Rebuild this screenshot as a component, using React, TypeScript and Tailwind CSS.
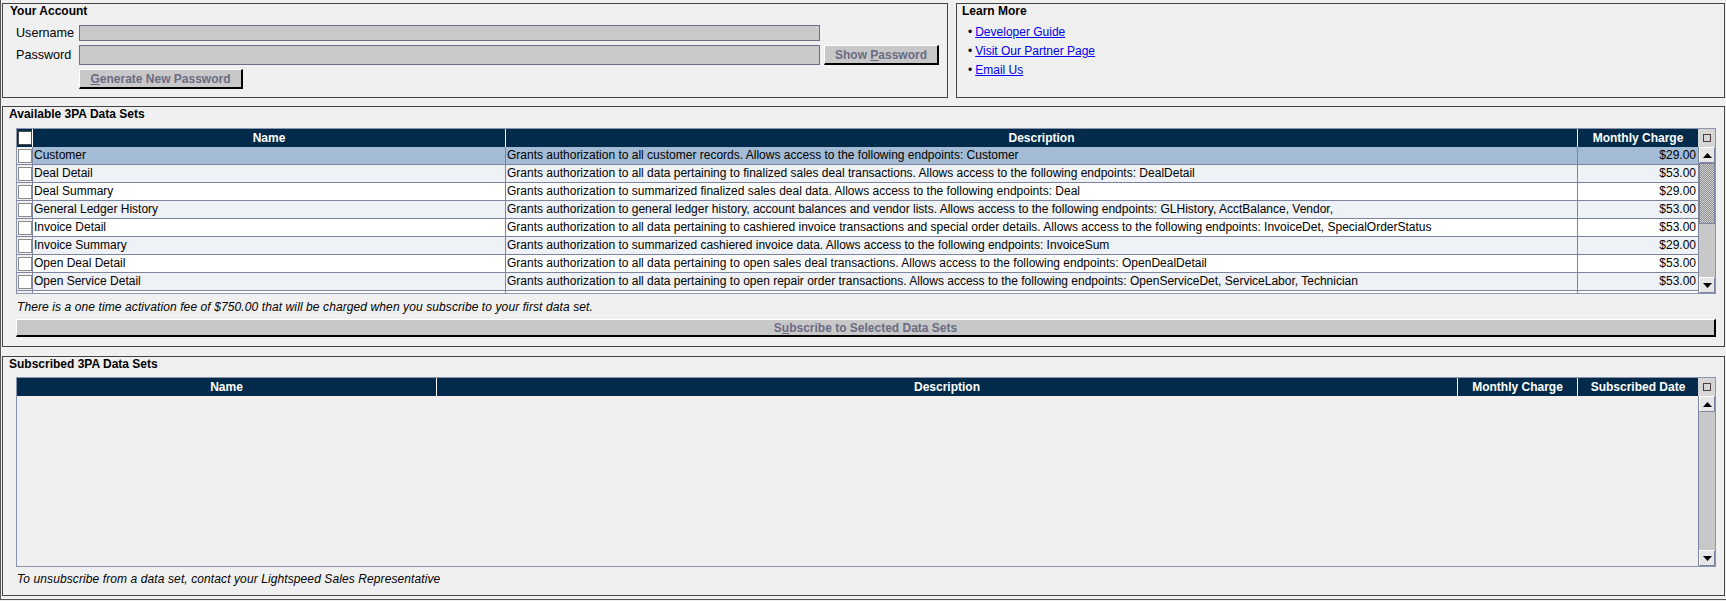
import React from "react";

type Row = { name: string; desc: string; charge: string };

const rows: Row[] = [
  { name: "Customer", desc: "Grants authorization to all customer records. Allows access to the following endpoints: Customer", charge: "$29.00" },
  { name: "Deal Detail", desc: "Grants authorization to all data pertaining to finalized sales deal transactions. Allows access to the following endpoints: DealDetail", charge: "$53.00" },
  { name: "Deal Summary", desc: "Grants authorization to summarized finalized sales deal data. Allows access to the following endpoints: Deal", charge: "$29.00" },
  { name: "General Ledger History", desc: "Grants authorization to general ledger history, account balances and vendor lists. Allows access to the following endpoints: GLHistory, AcctBalance, Vendor,", charge: "$53.00" },
  { name: "Invoice Detail", desc: "Grants authorization to all data pertaining to cashiered invoice transactions and special order details. Allows access to the following endpoints: InvoiceDet, SpecialOrderStatus", charge: "$53.00" },
  { name: "Invoice Summary", desc: "Grants authorization to summarized cashiered invoice data. Allows access to the following endpoints: InvoiceSum", charge: "$29.00" },
  { name: "Open Deal Detail", desc: "Grants authorization to all data pertaining to open sales deal transactions. Allows access to the following endpoints: OpenDealDetail", charge: "$53.00" },
  { name: "Open Service Detail", desc: "Grants authorization to all data pertaining to open repair order transactions. Allows access to the following endpoints: OpenServiceDet, ServiceLabor, Technician", charge: "$53.00" },
  { name: "", desc: "", charge: "" },
];

const UpArrow = () => (
  <svg width="9" height="5" viewBox="0 0 9 5">
    <path d="M0 5 L4.5 0 L9 5 Z" fill="#000" />
  </svg>
);
const DownArrow = () => (
  <svg width="9" height="5" viewBox="0 0 9 5">
    <path d="M0 0 L4.5 5 L9 0 Z" fill="#000" />
  </svg>
);

function ScrollBtn({ up }: { up: boolean }) {
  return (
    <div className="h-[16px] w-[16px] flex items-center justify-center bg-[#e6e6e6] border border-t-white border-l-white border-b-[#7c84a0] border-r-[#7c84a0] shrink-0">
      {up ? <UpArrow /> : <DownArrow />}
    </div>
  );
}

function Checkbox({ dark }: { dark?: boolean }) {
  return (
    <div
      className={
        dark
          ? "w-[14px] h-[14px] bg-white border border-[#4a4a4a]"
          : "w-[14px] h-[14px] bg-white border border-[#8a8a8a]"
      }
    />
  );
}

function Corner() {
  return (
    <div className="w-[17px] bg-[#d6d6d6] flex items-center justify-center shrink-0">
      <div className="w-[8px] h-[8px] border border-[#503a3a]" />
    </div>
  );
}

function Btn({ children, className }: { children: React.ReactNode; className: string }) {
  return (
    <div
      className={
        "bg-[#c8c8c8] border-t border-l border-t-white border-l-white border-b-2 border-r-2 border-b-black border-r-black text-[#6b6b84] font-bold text-[12px] flex items-center justify-center " +
        className
      }
    >
      {children}
    </div>
  );
}

export default function App() {
  return (
    <div className="w-[1726px] h-[601px] bg-[#f0f0f0] text-[12px] text-black font-['Liberation_Sans',Arial,sans-serif] overflow-hidden">
      <div className="h-[600px] border-l border-b border-[#555] pl-[1px] pr-[1px] pt-[3px] flex flex-col">
        {/* Top row */}
        <div className="flex gap-[8px] h-[95px] shrink-0">
          <div className="w-[946px] border border-[#444] pl-[13px] flex flex-col">
            <div className="font-bold leading-[14px] -ml-[6px]">Your Account</div>
            <div className="flex items-center mt-[7px] h-[16px]">
              <div className="w-[63px] text-[12.6px]">Username</div>
              <div className="w-[741px] h-[16px] bg-[#c9c9c9] border border-[#6e6e86]" />
            </div>
            <div className="flex items-center mt-[4px] h-[20px]">
              <div className="w-[63px] text-[12.6px]">Password</div>
              <div className="w-[741px] h-[20px] bg-[#c9c9c9] border border-[#6e6e86]" />
              <Btn className="ml-[4px] w-[115px] h-[20px]">
                <span>
                  Show <span className="underline">P</span>assword
                </span>
              </Btn>
            </div>
            <div className="flex mt-[4px] pl-[63px]">
              <Btn className="w-[164px] h-[20px]">
                <span>
                  <span className="underline">G</span>enerate New Password
                </span>
              </Btn>
            </div>
          </div>
          <div className="w-[769px] border border-[#444] pl-[5px] flex flex-col">
            <div className="font-bold leading-[14px]">Learn More</div>
            <div className="mt-[7px] pl-[6px] flex flex-col gap-[5px] leading-[14px]">
              {["Developer Guide", "Visit Our Partner Page", "Email Us"].map((t) => (
                <div key={t} className="flex items-center">
                  <span className="mr-[3px]">•</span>
                  <span className="text-[#0000ee] underline">{t}</span>
                </div>
              ))}
            </div>
          </div>
        </div>

        {/* Available */}
        <div className="mt-[8px] h-[241px] shrink-0 border border-[#444] flex flex-col">
          <div className="font-bold leading-[14px] pl-[6px]">Available 3PA Data Sets</div>
          <div className="mt-[7px] ml-[13px] mr-[8px] border border-[#8a94ae] flex flex-col">
            <div className="flex h-[18px] bg-[#022a4b] text-white font-bold leading-[18px]">
              <div className="w-[16px] border-r border-white flex items-center justify-center">
                <Checkbox dark />
              </div>
              <div className="w-[473px] border-r border-white text-center">Name</div>
              <div className="w-[1072px] border-r border-white text-center">Description</div>
              <div className="w-[120px] text-center">Monthly Charge</div>
              <Corner />
            </div>
            <div className="flex h-[146px]">
              <div className="w-[1681px] overflow-hidden flex flex-col">
                {rows.map((r, i) => (
                  <div
                    key={i}
                    className={
                      "flex h-[18px] shrink-0 border-b border-[#7c84a0] leading-[17px] " +
                      (i === 0 ? "bg-[#a3bbd4]" : i % 2 === 1 ? "bg-[#eef1f5]" : "bg-white")
                    }
                  >
                    <div className="w-[16px] border-r border-[#7c84a0] flex items-center justify-center bg-[#f0f0f0]">
                      {r.name ? <Checkbox /> : null}
                    </div>
                    <div className="w-[473px] border-r border-[#7c84a0] pl-[1px] whitespace-nowrap overflow-hidden">{r.name}</div>
                    <div className="w-[1072px] border-r border-[#7c84a0] pl-[1px] whitespace-nowrap overflow-hidden">{r.desc}</div>
                    <div className="w-[120px] text-right pr-[2px]">{r.charge}</div>
                  </div>
                ))}
              </div>
              <div className="w-[17px] flex flex-col bg-[#c8c8c8] border-l border-[#7c84a0]">
                <ScrollBtn up />
                <div className="h-[61px] border border-[#7c84a0] bg-[image:repeating-conic-gradient(#8e8e8e_0_25%,#d2d2d2_0_50%)] bg-[length:2px_2px]" />
                <div className="flex-1" />
                <ScrollBtn up={false} />
              </div>
            </div>
          </div>
          <div className="mt-[6px] pl-[14px] italic leading-[14px] tracking-[0.1px]">
            There is a one time activation fee of $750.00 that will be charged when you subscribe to your first data set.
          </div>
          <Btn className="mt-[5px] ml-[13px] mr-[8px] h-[18px]">
            <span>
              S<span className="underline">u</span>bscribe to Selected Data Sets
            </span>
          </Btn>
        </div>

        {/* Subscribed */}
        <div className="mt-[9px] h-[240px] shrink-0 border border-[#444] flex flex-col">
          <div className="font-bold leading-[14px] pl-[6px]">Subscribed 3PA Data Sets</div>
          <div className="mt-[6px] ml-[13px] mr-[8px] border border-[#8a94ae] flex flex-col">
            <div className="flex h-[18px] bg-[#022a4b] text-white font-bold leading-[18px]">
              <div className="w-[420px] border-r border-white text-center">Name</div>
              <div className="w-[1021px] border-r border-white text-center">Description</div>
              <div className="w-[120px] border-r border-white text-center">Monthly Charge</div>
              <div className="w-[120px] text-center">Subscribed Date</div>
              <Corner />
            </div>
            <div className="flex h-[170px]">
              <div className="w-[1681px]" />
              <div className="w-[17px] flex flex-col bg-[#c8c8c8] border-l border-[#7c84a0]">
                <ScrollBtn up />
                <div className="flex-1" />
                <ScrollBtn up={false} />
              </div>
            </div>
          </div>
          <div className="mt-[5px] pl-[14px] italic leading-[14px] tracking-[0.1px]">
            To unsubscribe from a data set, contact your Lightspeed Sales Representative
          </div>
        </div>
      </div>
    </div>
  );
}
